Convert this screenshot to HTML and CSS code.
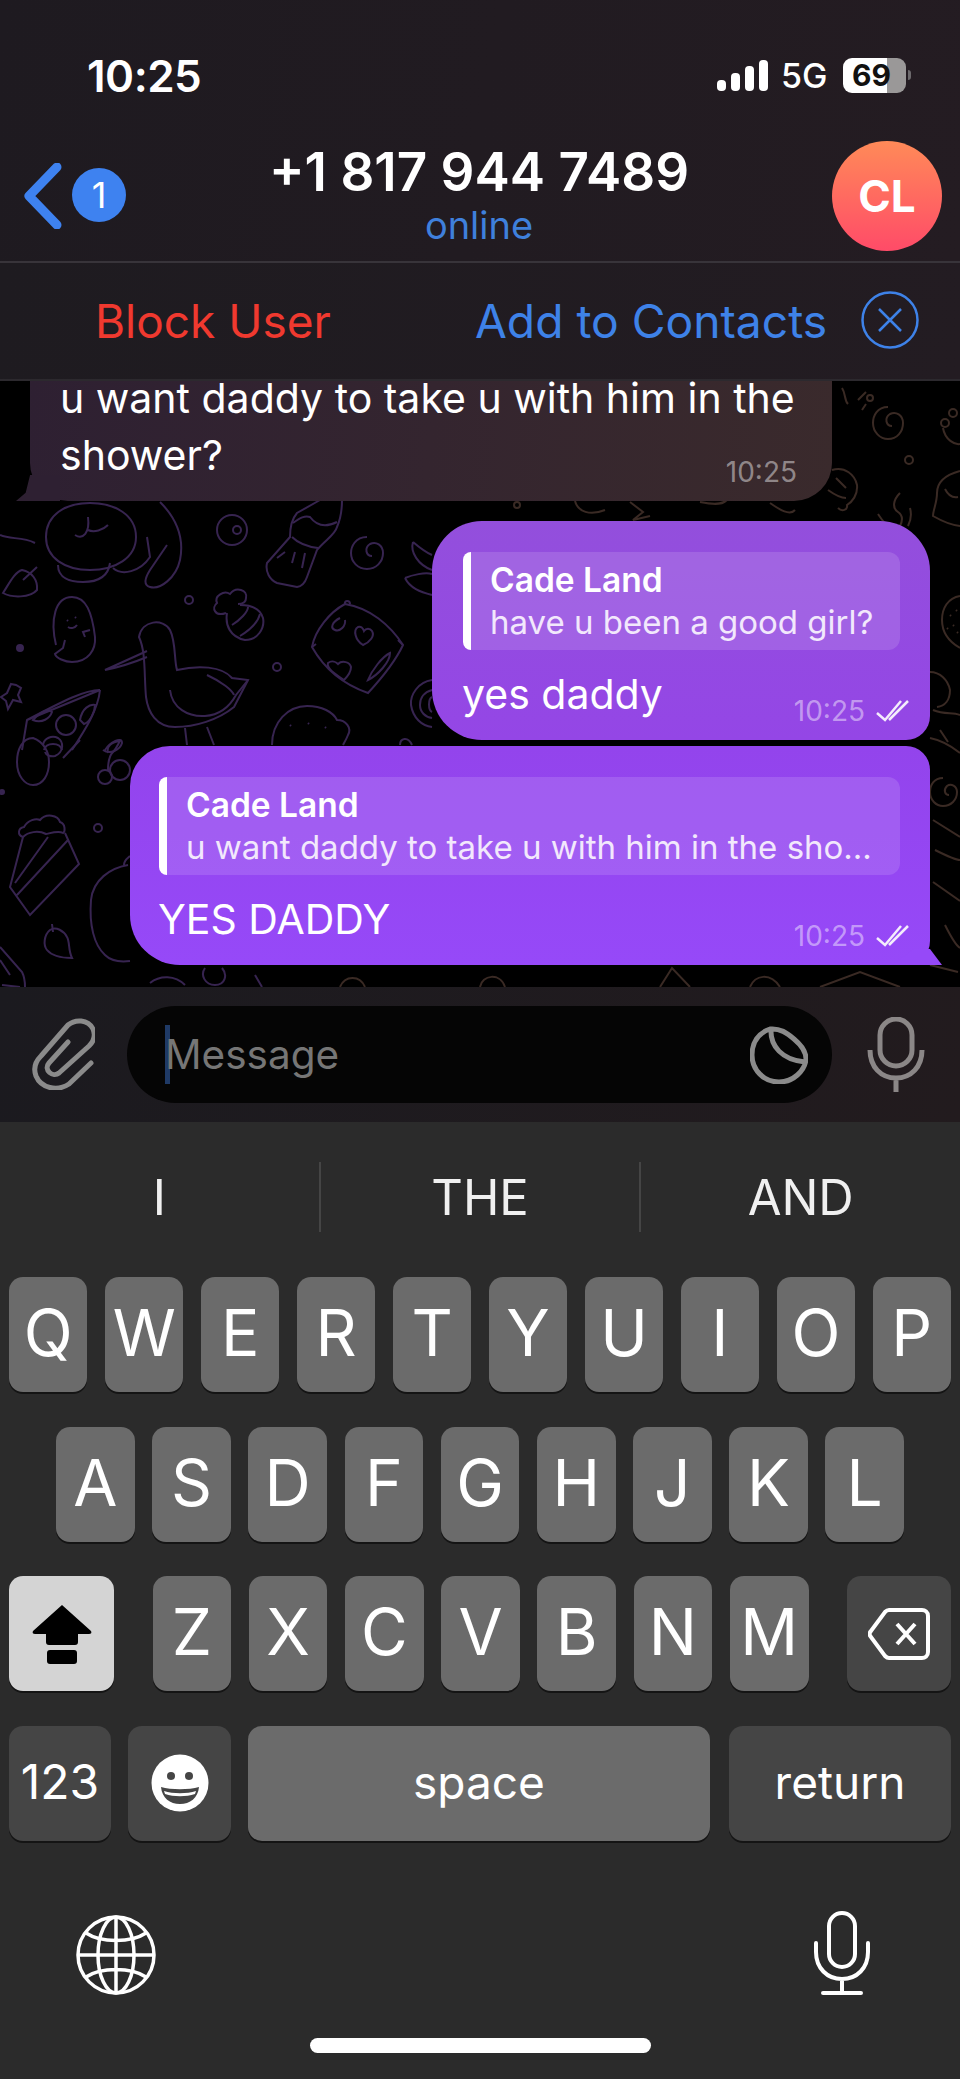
FILE: index.html
```html
<!DOCTYPE html>
<html lang="en">
<head>
<meta charset="utf-8">
<title>Chat</title>
<link rel="stylesheet" href="styles.css">
</head>
<body>
<main class="phone">
  <header class="top">
    <div class="status">
      <span class="clock">10:25</span>
      <div class="indicators">
        <div class="signal"><i class="b1"></i><i class="b2"></i><i class="b3"></i><i class="b4"></i></div>
        <span class="net">5G</span>
        <div class="battery"><span class="battery-num">69</span></div>
        <i class="battery-cap"></i>
      </div>
    </div>
    <div class="nav">
      <svg class="chev" viewBox="0 0 40 66"><path d="M33 4 L5 33 L33 62"/></svg>
      <span class="badge">1</span>
      <div class="title"><div class="phone-num">+1 817 944 7489</div><div class="online">online</div></div>
      <div class="avatar">CL</div>
    </div>
  </header>
  <div class="actions">
    <span class="block">Block User</span>
    <span class="add">Add to Contacts</span>
    <svg class="close" viewBox="0 0 58 58"><circle cx="29" cy="29" r="27.5"/><path d="M18 18 L40 40 M40 18 L18 40"/></svg>
  </div>
  <section class="chat">
    <svg class="wall" viewBox="0 381 960 606" aria-hidden="true">
      <g class="purple">
        <!-- seal -->
        <path d="M46 537C46 515 65 503 90 503C115 503 136 515 136 537C136 558 115 570 90 570C65 570 46 558 46 537Z"/>
        <path d="M58 565C58 578 70 582 83 582C96 582 108 578 110 563"/>
        <path d="M75 535C83 540 90 533 88 517M88 530C94 533 103 530 108 525"/>
        <path d="M113 568C122 576 140 572 150 557L147 537"/>
        <path d="M160 502C178 520 184 540 180 560C176 578 160 590 150 587C143 585 145 578 150 570L167 545"/>
        <path d="M0 535C10 540 22 536 35 543"/>
        <path d="M3 593C10 582 15 572 22 570C32 572 38 580 37 590C30 598 12 598 3 593ZM37 567L23 580"/>
        <circle cx="232" cy="530" r="15"/><circle cx="237" cy="530" r="4"/>
        <!-- brush -->
        <path d="M320 500L297 513C291 520 290 530 290 537L267 563C265 572 270 580 277 583L297 587C304 586 306 580 307 577L317 550C325 540 335 535 337 527C341 518 342 510 342 500"/>
        <path d="M293 523C300 518 305 515 310 517C316 525 325 528 337 522M292 537C300 545 310 547 318 548M277 558L285 552M292 563L295 552M302 568L305 553"/>
        <path d="M367 537C355 537 351 547 351 553C351 562 358 569 367 569C376 569 383 562 383 553C383 545 376 541 370 544C364 548 366 556 372 556"/>
        <path d="M413 542C410 552 418 565 432 570M413 542C420 548 425 552 432 555M405 578C410 588 420 592 432 595M405 578C412 575 425 572 432 574"/>
        <!-- ghost -->
        <path d="M56 645C50 620 55 597 72 597C86 597 92 612 95 637C96 650 88 662 72 662C65 662 56 658 55 654L63 648L65 640"/>
        <path d="M67 620L68 621M75 617L76 618M68 627C71 629 75 628 77 625M85 637L83 632L90 630"/>
        <circle cx="189" cy="600" r="4"/><circle cx="277" cy="667" r="4"/><circle class="dot" cx="20" cy="648" r="3"/>
        <!-- bee -->
        <path d="M226 613C215 617 211 608 217 603C214 596 224 590 230 594C236 586 248 590 246 598C246 602 243 604 238 604"/>
        <path d="M227 613C225 625 230 637 245 640C258 640 265 628 263 618C260 608 250 605 240 605"/>
        <path d="M232 625C240 620 248 612 248 607M240 636C250 630 258 622 260 614"/>
        <!-- bird -->
        <path d="M139 637C142 620 163 618 170 630C176 642 174 660 177 670C198 665 222 666 232 678L248 680L234 707C218 720 195 727 175 727C156 727 148 712 146 697C144 675 146 652 139 637Z"/>
        <path d="M147 651L105 670C120 667 135 662 147 657"/>
        <path d="M170 690C172 708 188 717 205 716C220 715 230 706 236 695L248 680M207 675C222 682 232 690 234 695"/>
        <path d="M185 728L187 745M207 727L214 745"/>
        <!-- pillow -->
        <path d="M345 604C330 612 315 630 312 647C325 670 345 685 368 693C380 680 395 662 403 645C390 625 370 608 345 604Z"/>
        <path d="M345 604C344 600 350 600 350 604M312 647L316 644M403 645L398 640"/>
        <path d="M363 645C355 640 353 630 358 627C361 626 363 628 364 631C366 628 370 628 372 631C375 636 370 642 363 645Z"/>
        <path d="M344 680C335 674 326 668 328 663C332 660 336 662 338 664C342 660 350 662 351 667C351 672 348 676 344 680Z"/>
        <path d="M368 680C372 670 382 657 390 653C390 662 378 675 368 680Z"/>
        <path d="M340 618C332 622 330 628 335 630C340 632 346 626 345 620"/>
        <!-- rings -->
        <path d="M432 680C418 682 410 695 411 705C413 718 422 726 432 727M432 690C424 692 420 698 420 705C420 712 425 717 432 718M432 697C428 699 428 710 432 712"/>
        <!-- burger -->
        <path d="M272 745C272 722 288 706 307 706C322 706 333 712 337 720C346 720 352 728 348 735C346 740 344 743 343 745"/>
        <path d="M290 725L291 726M308 723L309 724M325 727L326 728"/>
        <path d="M400 745C400 738 408 736 412 745"/>
        <!-- star -->
        <path d="M11 684L16 685L21 688L18 695L21 702L13 700L8 709L6 701L1 697L7 693Z"/>
        <!-- pizza -->
        <path d="M100 690L27 720L22 750M100 690C98 710 85 730 72 750M100 690C85 690 65 700 27 720"/>
        <path d="M33 720C40 712 48 708 52 712C50 718 42 724 33 720Z"/>
        <circle cx="66" cy="725" r="10"/>
        <path d="M80 720C82 708 90 704 95 705C95 712 90 722 84 724Z"/>
        <path d="M44 750C46 742 60 742 62 750"/>
        <path d="M105 750C110 742 122 736 122 743C120 750 110 755 103 750"/>
        <!-- egg cherries -->
        <path d="M33 738C22 738 17 750 17 762C17 776 25 785 33 785C43 785 49 775 49 762C49 752 44 742 33 738Z"/>
        <path d="M43 745C44 738 52 735 58 738C64 742 64 752 55 756C50 757 46 755 45 752M63 758L80 740"/>
        <circle cx="120" cy="770" r="10"/><circle cx="105" cy="777" r="7"/>
        <path d="M108 770C108 760 110 755 113 752M113 752C117 748 118 744 120 741C112 742 106 746 108 753"/>
        <!-- popcorn -->
        <path d="M23 837C17 835 18 828 24 827C28 820 36 818 40 820C46 813 58 815 60 822C66 824 65 832 63 833C58 830 48 834 46 834C38 830 28 832 23 837Z"/>
        <path d="M23 837L10 887L30 915L79 864L65 833M48 837L15 883M68 840L17 895"/>
        <circle cx="98" cy="828" r="4"/><circle class="dot" cx="2" cy="792" r="2"/>
        <path d="M50 930C44 935 43 945 47 950C52 956 62 958 72 958C68 950 70 942 67 937C64 931 56 926 50 930ZM52 924L53 932"/>
        <path d="M0 947L22 972C25 978 25 982 25 987M0 960L10 975"/>
        <path d="M128 865C110 868 93 880 91 900C89 925 94 945 105 955C112 962 122 962 130 961M124 865C124 860 128 858 130 856"/>
        <path d="M2 985L20 987"/>
        <path d="M150 983C160 975 175 975 185 985M205 968C200 975 205 985 215 985C225 985 228 975 222 968M255 975L262 987"/>
      </g>
      <g class="brown">
        <circle cx="517" cy="505" r="3"/>
        <path d="M575 501C578 512 590 516 605 510M630 502L643 512L633 520L650 516M700 502C715 505 725 505 728 498M770 503C780 510 790 516 795 510"/>
        <path d="M842 388C846 394 844 400 848 404M858 400L866 392M862 410L866 404"/>
        <circle cx="870" cy="398" r="3"/>
        <path d="M888 407C877 407 873 416 873 423C873 432 880 439 888 439C897 439 903 432 903 423C903 415 896 411 890 414C884 418 886 426 892 426"/>
        <circle cx="945" cy="423" r="4"/><circle cx="953" cy="413" r="4"/>
        <path d="M943 428C945 440 955 445 960 444"/>
        <circle cx="909" cy="460" r="4"/>
        <path d="M832 470C845 466 855 475 857 485C858 495 852 502 847 505C848 510 842 512 838 508M836 478L846 488M828 490C835 495 840 498 846 498"/>
        <path d="M900 493C893 500 892 508 898 512C904 516 902 522 900 526M878 514C882 520 886 526 892 527M910 508C912 515 910 522 908 526"/>
        <path d="M960 471C945 475 937 483 937 493C937 503 933 510 933 516C940 520 950 525 960 526M945 489C948 495 953 498 958 497"/>
        <path d="M960 596C948 598 942 608 942 620C942 630 946 640 960 648M950 615L951 616M956 610L957 611M953 625L954 626M947 628L948 629M957 632L958 633"/>
        <path d="M930 672C940 672 948 680 950 690C950 700 945 706 937 707M933 710C945 715 952 712 960 715M930 738C940 740 950 745 960 753M940 730L948 742"/>
        <path d="M943 778C934 778 930 785 930 792C930 800 936 806 943 806C951 806 957 800 957 792C957 786 951 783 947 786C943 790 945 795 949 795"/>
        <path d="M933 820L960 837M933 882L960 901M945 925C950 935 955 945 960 948M935 850C945 855 955 860 960 860"/>
        <path d="M930 965L958 972M820 987L860 972L900 987M750 987C755 975 770 972 780 987M660 987L672 968L690 987M480 987C482 975 500 972 505 987M340 987C345 975 360 975 365 987"/>
      </g>
    </svg>

    <article class="bubble recv">
      <p class="msg-wrap">u want daddy to take u with him in the<br>shower?</p>
      <span class="time recv-time">10:25</span>
    </article>

    <article class="bubble sent first">
      <div class="reply">
        <div class="reply-name">Cade Land</div>
        <div class="reply-text">have u been a good girl?</div>
      </div>
      <div class="body-row">
        <span class="msg">yes daddy</span>
        <span class="meta"><span class="time">10:25</span><svg class="ticks" viewBox="0 0 34 24"><path d="M1 14L9 21L25 2M13 21L32 2"/></svg></span>
      </div>
    </article>

    <article class="bubble sent second">
      <div class="reply">
        <div class="reply-name">Cade Land</div>
        <div class="reply-text">u want daddy to take u with him in the sho...</div>
      </div>
      <div class="body-row">
        <span class="msg">YES DADDY</span>
        <span class="meta"><span class="time">10:25</span><svg class="ticks" viewBox="0 0 34 24"><path d="M1 14L9 21L25 2M13 21L32 2"/></svg></span>
      </div>
    </article>
  </section>

  <div class="composer">
    <svg class="attach" viewBox="0 0 64 72"><path d="M60 45L38 66C26 74 10 70 5 58C2 50 5 43 10 38L37 7C44 1 57 1 62 11C65 18 62 24 58 28L28 55C22 60 12 52 18 45L37 24"/></svg>
    <div class="input">
      <i class="caret"></i>
      <span class="placeholder">Message</span>
      <svg class="sticker" viewBox="0 0 58 58"><path d="M20 3C8 7 2 17 2 29C2 44 14 56 29 56C43 56 55 45 56 33C56 25 50 18 44 13C37 7 30 2 20 3ZM21 3C20 20 32 34 55 36"/></svg>
    </div>
    <svg class="mic" viewBox="0 0 58 76"><rect x="13" y="2" width="32" height="47" rx="16"/><path d="M3 33C3 50 14 61 29 61C44 61 55 50 55 33M29 61V75"/></svg>
  </div>

  <div class="keyboard">
    <div class="suggest">
      <span class="sug">I</span><i class="sep"></i><span class="sug">THE</span><i class="sep"></i><span class="sug">AND</span>
    </div>
    <div class="rows">
      <div class="row">
        <span class="key">Q</span><span class="key">W</span><span class="key">E</span><span class="key">R</span><span class="key">T</span><span class="key">Y</span><span class="key">U</span><span class="key">I</span><span class="key">O</span><span class="key">P</span>
      </div>
      <div class="row row2">
        <span class="key">A</span><span class="key">S</span><span class="key">D</span><span class="key">F</span><span class="key">G</span><span class="key">H</span><span class="key">J</span><span class="key">K</span><span class="key">L</span>
      </div>
      <div class="row row3">
        <span class="key shift"><svg viewBox="0 0 60 60"><path d="M30 1L59 27C60 29 59 30 57 30H46V38C46 40 45 41 43 41H17C15 41 14 40 14 38V30H3C1 30 0 29 1 27Z"/><rect x="15" y="46" width="30" height="14" rx="3"/></svg></span>
        <div class="letters"><span class="key">Z</span><span class="key">X</span><span class="key">C</span><span class="key">V</span><span class="key">B</span><span class="key">N</span><span class="key">M</span></div>
        <span class="key dark del"><svg viewBox="0 0 62 52"><path d="M21 2H54C57 2 60 4 60 8V44C60 48 57 50 54 50H21C19 50 18 49 17 48L3 29C1 27 1 25 3 23L17 4C18 3 19 2 21 2ZM29 16L47 36M47 16L29 36"/></svg></span>
      </div>
      <div class="row row4">
        <span class="key dark k123">123</span>
        <span class="key dark kemoji"><svg viewBox="0 0 58 58"><circle cx="29" cy="29" r="28.500" class="face"/><circle cx="20" cy="22" r="4" class="feat"/><circle cx="38" cy="22" r="4" class="feat"/><path d="M10 33C20 36 38 36 48 33C47 44 39 50 29 50C19 50 11 44 10 33Z" class="feat"/><path d="M13 37C22 40 36 40 45 37L44 40C35 43 23 43 14 40Z" class="face"/></svg></span>
        <span class="key kspace">space</span>
        <span class="key dark kreturn">return</span>
      </div>
    </div>
    <div class="sys">
      <svg class="globe" viewBox="0 0 80 80"><circle cx="40" cy="40" r="38"/><ellipse cx="40" cy="40" rx="18" ry="38"/><path d="M40 2V78M2 40H78M10 18C25 28 55 28 70 18M10 62C25 52 55 52 70 62"/></svg>
      <svg class="sysmic" viewBox="0 0 58 84"><rect x="16" y="2" width="26" height="54" rx="13"/><path d="M3 32V41C3 57 14 68 29 68C44 68 55 57 55 41V32M29 68V82M10 82H48"/></svg>
    </div>
    <div class="home"></div>
  </div>
</main>
</body>
</html>
```

FILE: styles.css
```css
* { box-sizing: border-box; }
html, body { margin: 0; padding: 0; background: #2b2b2b; }
body { font-family: Inter, "Liberation Sans", sans-serif; color: #fff; width: 960px; height: 2079px; overflow: hidden; }
.phone { width: 960px; height: 2079px; display: flex; flex-direction: column; }

.top { height: 263px; background: linear-gradient(100deg, #1e1a20, #241c22); border-bottom: 2px solid #38343a; flex: none; }
.status { height: 141px; display: flex; justify-content: space-between; padding: 54px 0 0 87px; }
.clock { font-size: 44px; font-weight: 600; line-height: 44px; letter-spacing: -0.5px; }
.indicators { display: flex; align-items: flex-start; padding: 4px 49px 0 0; }
.signal { display: flex; align-items: flex-end; gap: 4.500px; height: 31px; margin: 2px 14px 0 0; }
.signal i { display: block; width: 9.500px; background: #fff; border-radius: 4px; }
.signal .b1 { height: 11px; } .signal .b2 { height: 18px; } .signal .b3 { height: 25px; } .signal .b4 { height: 31px; }
.net { font-size: 34px; font-weight: 500; line-height: 36px; width: 62px; margin-left: -1px; }
.battery { width: 63px; height: 35px; border-radius: 9px; background: linear-gradient(90deg, #fff 0 44px, #9a9898 44px); color: #111; display: flex; align-items: center; padding-left: 9px; }
.battery-num { font-size: 30px; font-weight: 700; line-height: 35px; }
.battery-cap { display: block; width: 3px; height: 10px; margin: 12px 0 0 2px; background: #6d6a6d; border-radius: 0 3px 3px 0; }

.nav { height: 120px; position: relative; display: flex; align-items: flex-start; padding-left: 24px; }
.chev { width: 40px; height: 66px; margin-top: 22px; }
.chev path { fill: none; stroke: #3e82f0; stroke-width: 9; stroke-linecap: round; stroke-linejoin: round; }
.badge { width: 54px; height: 54px; margin: 27px 0 0 8px; border-radius: 50%; background: #3e82f0; font-size: 36px; line-height: 54px; text-align: center; }
.title { position: absolute; left: 0; width: 958px; top: 1px; text-align: center; }
.phone-num { font-size: 53px; line-height: 60px; font-weight: 600; }
.online { font-size: 38px; line-height: 46px; color: #3f80dc; }
.avatar { position: absolute; left: 832px; top: 0; width: 110px; height: 110px; border-radius: 50%; background: linear-gradient(#ff8a58, #ff4b68); font-size: 44px; font-weight: 700; line-height: 110px; text-align: center; }

.actions { height: 118px; flex: none; display: flex; align-items: center; padding-left: 95px; background: linear-gradient(100deg, #1e1b20, #231c22); border-bottom: 2px solid #2c292e; }
.block { font-size: 46px; color: #f0392f; width: 380px; }
.add { font-size: 46.200px; color: #3e82e8; width: 386px; white-space: nowrap; }
.close { width: 58px; height: 58px; margin-top: -2px; }
.close circle, .close path { fill: none; stroke: #3e82e8; stroke-width: 2.500; }

.chat { height: 606px; flex: none; position: relative; overflow: hidden; background: #000; display: flex; flex-direction: column; justify-content: flex-end; padding-bottom: 22px; }
.wall { position: absolute; left: 0; top: 0; width: 960px; height: 606px; }
.wall path, .wall circle { fill: none; stroke-width: 2; }
.purple path, .purple circle { stroke: #372450; }
.brown path, .brown circle { stroke: #3a2a24; }
.purple .dot { fill: #372450; }

.bubble { position: relative; flex: none; }
.recv { width: 802px; margin: 0 0 20px 30px; padding: 7px 35px 11px 30px; border-radius: 0 0 38px 38px; background: linear-gradient(95deg, #2e2032, #3a2a2c); font-size: 41px; line-height: 57px; }
.recv::before { content: ""; position: absolute; left: -14px; bottom: 0; width: 44px; height: 26px; background: #2e2032; clip-path: polygon(32% 0, 100% 0, 100% 100%, 0 100%, 22% 68%); }
.msg-wrap { margin: 0; }
.time { font-size: 28px; line-height: 32px; color: rgba(255,255,255,.45); }
.recv-time { display: block; text-align: right; margin-top: -26px; height: 32px; position: relative; top: -2px; }

.sent { align-self: flex-end; margin-right: 30px; padding: 31px 20px 14px 31px; }
.first { width: 498px; height: 219px; background: linear-gradient(#934fdc, #9446e6); border-radius: 50px 50px 24px 50px; margin-bottom: 6px; }
.second { width: 800px; height: 219px; padding-left: 29px; background: linear-gradient(#9344ec, #9649f8); border-radius: 40px 24px 24px 50px; }
.second::after { content: ""; position: absolute; right: -12px; bottom: 0; width: 50px; height: 16px; background: #9649f8; clip-path: polygon(0 100%, 44% 0, 76% 0, 100% 100%); }
.reply { height: 98px; margin-right: 10px; padding: 7px 10px 0 19px; border-left: 8px solid #fff; border-radius: 8px 12px 12px 8px; background: rgba(255,255,255,.13); }
.reply-name { font-size: 33.500px; line-height: 42px; font-weight: 600; }
.reply-text { font-size: 33px; line-height: 42px; white-space: nowrap; color: #f2e8fc; }
.body-row { display: flex; justify-content: space-between; align-items: flex-start; margin-top: 16px; }
.msg { font-size: 41px; line-height: 57px; margin-left: -1px; }
.meta { display: flex; align-items: center; gap: 11px; margin-top: 29px; }
.ticks { width: 34px; height: 24px; }
.ticks path { fill: none; stroke: #f4ecfc; stroke-width: 2.500; }

.composer { height: 135px; flex: none; display: flex; align-items: flex-start; padding: 19px 0 0 0; background: linear-gradient(100deg, #1b1a1f, #221b1e); }
.attach { width: 64px; height: 72px; margin: 12px 0 0 31px; }
.attach path { fill: none; stroke: #8b8b8b; stroke-width: 5; stroke-linecap: round; stroke-linejoin: round; }
.input { width: 705px; height: 97px; margin-left: 32px; border-radius: 49px; background: #050505; display: flex; align-items: center; padding-left: 38px; position: relative; }
.caret { display: block; width: 5px; height: 59px; background: #1f3a66; }
.placeholder { font-size: 40.500px; color: #767676; flex: 1; margin-left: -5px; }
.sticker { width: 58px; height: 58px; margin-right: 24px; }
.sticker path { fill: none; stroke: #8b8b8b; stroke-width: 5; stroke-linejoin: round; }
.mic { width: 58px; height: 76px; margin: 11px 0 0 35px; }
.mic rect, .mic path { fill: none; stroke: #8b8787; stroke-width: 5; }

.keyboard { flex: 1; background: #2b2b2b; display: flex; flex-direction: column; }
.suggest { height: 155px; display: flex; align-items: center; padding-bottom: 5px; }
.sug { flex: 1; text-align: center; font-size: 49px; color: #f0f0f0; }
.sep { display: block; width: 2px; height: 70px; background: #454545; }
.rows { display: flex; flex-direction: column; gap: 34.500px; padding: 0 9px; }
.row { display: flex; gap: 17.500px; height: 115px; }
.row2 { padding: 0 47px; }
.key { flex: 1; display: flex; align-items: center; justify-content: center; background: #6b6b6b; border-radius: 14px; box-shadow: 0 2px 0 #141414; font-size: 64px; line-height: 1; padding-bottom: 3px; }
.dark { background: #454545; }
.shift { flex: none; width: 105px; background: #d4d4d4; padding: 0; }
.shift svg { width: 60px; height: 60px; }
.letters { flex: 1; display: flex; gap: 17.500px; margin: 0 21px; }
.del { flex: none; width: 104px; padding: 0; }
.del svg { width: 62px; height: 52px; }
.del path { fill: none; stroke: #fff; stroke-width: 4; }
.row4 { gap: 17px; }
.k123 { flex: none; width: 102px; font-size: 48px; }
.kemoji { flex: none; width: 103px; padding: 0; }
.kemoji svg { width: 58px; height: 58px; }
.face { fill: #fff; }
.feat { fill: #454545; }
.kspace { flex: none; width: 462px; font-size: 46px; }
.kreturn { flex: none; width: 222px; margin-left: 2px; font-size: 46px; }

.sys { display: flex; justify-content: space-between; align-items: flex-end; padding: 0 89px 0 76px; margin-top: 70px; height: 84px; }
.globe { width: 80px; height: 80px; }
.globe circle, .globe ellipse, .globe path { fill: none; stroke: #fff; stroke-width: 3.500; }
.sysmic { width: 58px; height: 84px; }
.sysmic rect, .sysmic path { fill: none; stroke: #fff; stroke-width: 4; stroke-linecap: round; }
.home { width: 341px; height: 15px; border-radius: 8px; background: #fff; margin: 43px auto 0; }
```
